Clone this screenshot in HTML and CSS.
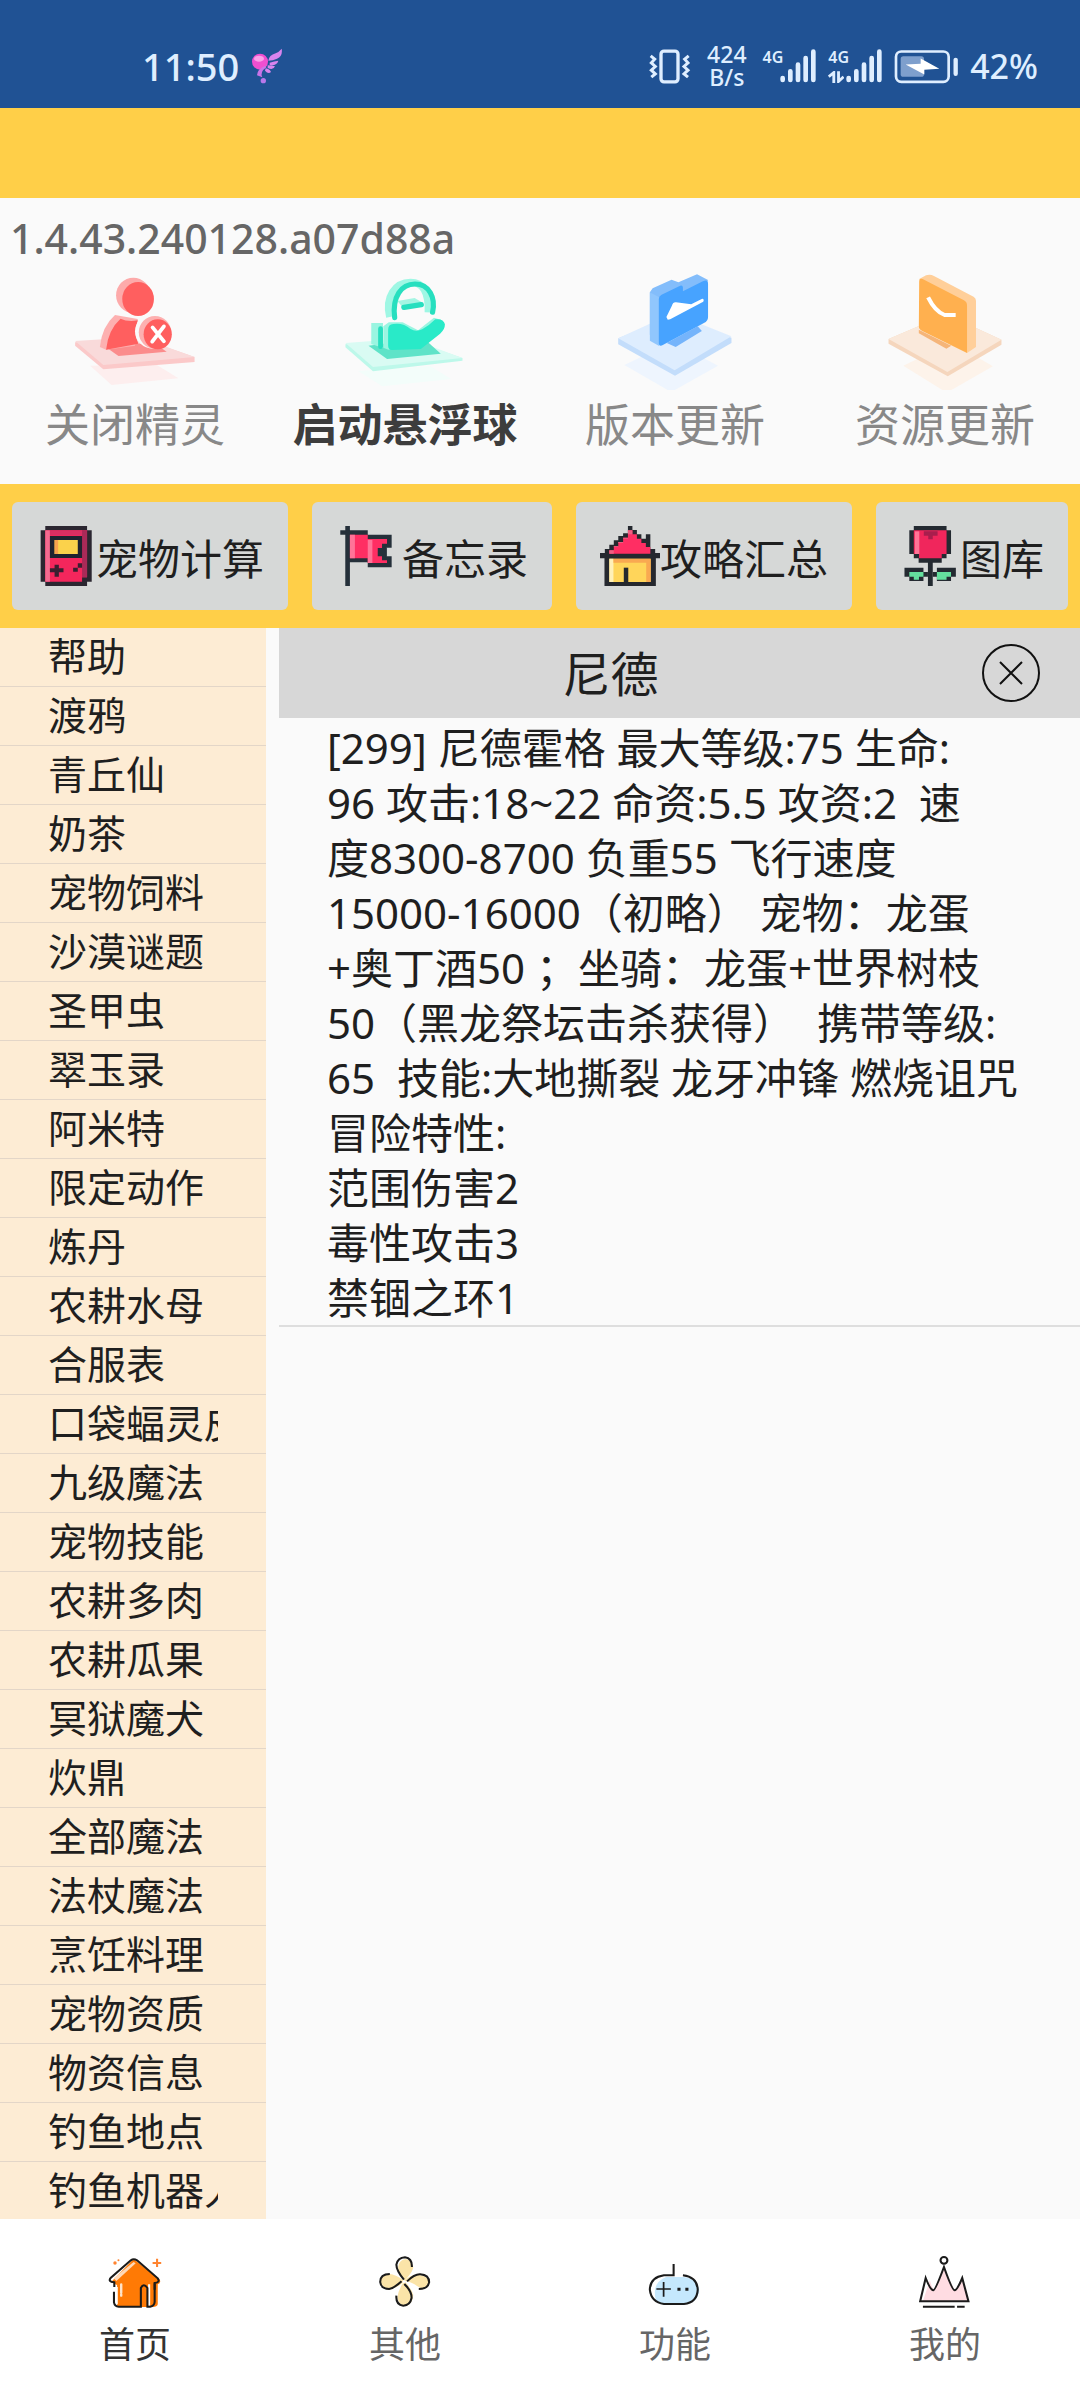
FILE: index.html
```html
<!DOCTYPE html>
<html lang="zh-CN">
<head>
  <meta charset="UTF-8" />
  <meta name="viewport" content="width=device-width, initial-scale=1.0"/>
  <title>首页</title>
  <link rel="stylesheet" href="styles.css">
</head>
<body>
  <div class="status-bar">
    <span class="time">11:50</span>
    <svg class="wing" viewBox="728 142 96 108" aria-hidden="true">
      <circle cx="755" cy="183" r="24" fill="#f04fd0"/>
      <ellipse cx="752" cy="174" rx="15" ry="9" fill="#fba0e8"/>
      <path d="M780 180q2-16 22-22q10-4 18-14q4 22-14 30q-12 6-26 6zM784 186q14-4 26-6q-4 16-26 13zM778 194q14 0 22 3q-5 13-22 5zM772 203q12 2 16 11q-8 8-18-4z" fill="#d884ee"/>
      <path d="M770 196q-24 10-24 28l16 6q-8-16 12-30z" fill="#c974e8"/>
      <circle cx="765" cy="240" r="8" fill="#b878ea"/>
    </svg>

    <div class="status-right">
      <svg class="vibrate" viewBox="147 84 126 104" fill="none" stroke="#dfeeff" aria-hidden="true">
        <rect x="183" y="90" width="51" height="92" rx="9" stroke-width="10"/>
        <path d="M152 104l12 10l-10 11l12 11l-12 11l12 11l-12 10M266 104l-12 10l10 11l-12 11l12 11l-12 11l12 10" stroke-width="9"/>
      </svg>
      <div class="speed">
        <span>424</span>
        <span>B/s</span>
      </div>
      <div class="signal">
        <span>4G</span>
        <svg viewBox="545 84 108 100" stroke="#dfeeff" stroke-width="14" stroke-linecap="round" aria-hidden="true">
          <path d="M553 170v6M576 150v26M599 130v46M622 110v66M645 91v85"/>
        </svg>
      </div>
      <div class="signal">
        <span>4G</span>
        <svg viewBox="545 84 108 100" stroke="#dfeeff" stroke-width="14" stroke-linecap="round" aria-hidden="true">
          <path d="M553 170v6M576 150v26M599 130v46M622 110v66M645 91v85"/>
        </svg>
        <svg class="data" viewBox="685 146 50 38" fill="none" stroke="#dfeeff" stroke-width="9" aria-hidden="true">
          <path d="M687 164l16-13v33M718 147v32l16-15"/>
        </svg>
      </div>
      <svg class="battery" viewBox="883 84 192 104" aria-hidden="true">
        <rect x="903" y="105" width="70" height="62" rx="8" fill="#7e9fcd"/>
        <rect x="889" y="91" width="158" height="91" rx="16" fill="none" stroke="#dfeeff" stroke-width="8"/>
        <path d="M918 130l45-2v-16l56 31l-45 3v14z" fill="#fff"/>
        <path d="M1068 116v42" stroke="#dfeeff" stroke-width="13" stroke-linecap="round"/>
      </svg>
      <span class="percent">42%</span>
    </div>
  </div>

  <div class="title-bar"></div>

  <section class="top-panel">
    <p class="version">1.4.43.240128.a07d88a</p>
    <div class="actions">
      <button type="button" class="action">
        <svg viewBox="209 45 366 360" preserveAspectRatio="none" aria-hidden="true">
          <path d="M262 332l190-4l66 42l-194 20z" fill="#fdeeee"/>
          <path d="M218 262l185-14l162 58v15l-265 22l-82-71z" fill="#fbc9c9"/>
          <path d="M218 258l185-12l162 60l-265 24z" fill="#f9dada"/>
          <path d="M312 280l130-20l42 30l-140 13z" fill="#fb8c8c"/>
          <ellipse cx="387" cy="121" rx="50" ry="53" fill="#fdaaaa"/>
          <ellipse cx="401" cy="132" rx="46" ry="51" fill="#ff5f5f"/>
          <path d="M290 276q6-62 44-96l66 12l-8 80l-84 12z" fill="#fdb0b0"/>
          <path d="M308 284q6-60 42-93q20 10 50 5q-14 40 2 70z" fill="#ff5f5f"/>
          <ellipse cx="444" cy="229" rx="52" ry="52" fill="#fafafa"/>
          <ellipse cx="450" cy="232" rx="47" ry="49" fill="#fdb0b0"/>
          <ellipse cx="458" cy="238" rx="41" ry="45" fill="#ff5f5f"/>
          <path d="M443 217l33 42M476 214l-34 46" stroke="#fff" stroke-width="11" stroke-linecap="round"/>
        </svg>
        <span>关闭精灵</span>
      </button>
      <button type="button" class="action active">
        <svg viewBox="993 45 366 360" preserveAspectRatio="none" aria-hidden="true">
          <path d="M1040 348l210-14l60 38l-200 22z" fill="#f3fdfa"/>
          <path d="M1003 268l185-14l155 55v8l-260 32l-80-72z" fill="#bdf8ea"/>
          <path d="M1003 264l185-14l155 59l-260 27z" fill="#d9fbf3"/>
          <path d="M1070 272l160-22l50 46l-156 16z" fill="#5fe3c8"/>
          <path d="M1132 186C1118 126 1148 82 1192 82C1228 82 1246 110 1244 172" fill="none" stroke="#9ff7e4" stroke-width="22"/>
          <path d="M1146 188C1138 124 1166 87 1205 87C1246 87 1266 128 1256 172" fill="none" stroke="#27dfbf" stroke-width="15" stroke-linecap="round"/>
          <path d="M1154 138l50-9l26 16l-56 18z" fill="#a5f5e3"/>
          <path d="M1173 157l50-8" stroke="#27dfbf" stroke-width="16" stroke-linecap="round"/>
          <path d="M1078 204h34v75l-34-12z" fill="#9af5e1"/>
          <path d="M1105 221v54" stroke="#27dfbf" stroke-width="14" stroke-linecap="round"/>
          <path d="M1113 214l16-12l40 0l45 24l46-38l20 6l-60 60l-92 30l-15-6z" fill="#9af5e1"/>
          <path d="M1127 224Q1127 208 1142 207Q1170 202 1192 222Q1208 232 1226 223Q1246 212 1264 193Q1288 190 1292 208Q1292 224 1278 236L1222 282L1138 285Q1127 284 1127 272z" fill="#29eac8"/>
        </svg>
        <span>启动悬浮球</span>
      </button>
      <button type="button" class="action">
        <svg viewBox="209 45 366 360" preserveAspectRatio="none" aria-hidden="true">
          <path d="M245 330l140-70l132 72l-136 79z" fill="#eef5fe"/>
          <path d="M227 250l160-66l169 64v16l-164 98l-165-94z" fill="#c3ddfb"/>
          <path d="M227 250l160-76l169 70l-165 102z" fill="#deedfe"/>
          <path d="M368 264l90-50l12 14l-76 48z" fill="#75b4fb"/>
          <path d="M319 112l8-12l55-26l20 8l54-24l32 17l-10 20l-130 160l-29-16z" fill="#83bdfb"/>
          <path d="M319 112l27 15v146l-27-16z" fill="#90c6fd"/>
          <path d="M345 132q0-9 8-13l54-27q7-3 8 5v12l58-30q15-7 15 7v100q0 12-12 18l-118 65q-13 8-13-6z" fill="#47a3ff"/>
          <path d="M367 186l4 8l7-1l96-53q4-8-3-9l-32 17l-44-6q-9-1-12 10z" fill="#fff"/>
        </svg>
        <span>版本更新</span>
      </button>
      <button type="button" class="action">
        <svg viewBox="993 45 366 360" preserveAspectRatio="none" aria-hidden="true">
          <path d="M1055 332l140-70l120 72l-134 79z" fill="#fdf3ea"/>
          <path d="M1012 252l168-74l160 76v15l-156 95l-172-98z" fill="#f5d6bd"/>
          <path d="M1012 252l168-74l160 76l-157 97z" fill="#fae9db"/>
          <path d="M1100 224l94 48l-14 9l-80-46z" fill="#f5b579"/>
          <path d="M1101 72l20-11q12-4 23 2l115 62q7 4 7 12v139l-26 18z" fill="#ffcf9a"/>
          <path d="M1101 80q0-12 10-8l120 64q9 5 9 15v143l-130-66q-10-5-10-14z" fill="#ffb04f"/>
          <path d="M1127 127q20 42 48 53h32" fill="none" stroke="#fff" stroke-width="12"/>
        </svg>
        <span>资源更新</span>
      </button>
    </div>
  </section>

  <div class="tool-bar">
    <button type="button" class="tool">
      <svg viewBox="101 138 168 180" preserveAspectRatio="none" aria-hidden="true">
        <path d="M127 138h117v13h13v154h-13v13H127v-13h-13V151h13z" fill="#2b2630"/>
        <path d="M127 151h117v141H230v13H127z" fill="#f4265c"/>
        <path d="M127 151h13v154h-13z" fill="#f56a90"/>
        <path d="M140 151h90v15h-90z" fill="#d92f62"/>
        <path d="M230 151h14v141h-14z" fill="#a92a58"/>
        <path d="M140 168h90v66h-90z" fill="#1f2330"/>
        <path d="M153 180h65v42h-65z" fill="#fbd24b"/>
        <path d="M153 180h10v42h-10z" fill="#f6a24e"/>
        <path d="M153 254h12v11h13v12h-13v13h-12v-13h-13v-12h13zM205 263h13v12h-13zM218 250h12v13h-12z" fill="#3a1f30"/>
      </svg>
      宠物计算
    </button>
    <button type="button" class="tool">
      <svg class="flag" viewBox="941 138 185 180" preserveAspectRatio="none" aria-hidden="true">
        <path d="M967 138h13v13h50v13h67v39h-14v26h14v33h-67v-15h-50v71h-13V164h-14v-13h14z" fill="#25303a"/>
        <path d="M980 164h50v13h54v14h-14v13h-12v25h12v12h14v8h-54v-14h-50z" fill="#ff2e63"/>
        <path d="M980 164h14v71h-14zM1030 180h13v69h-13z" fill="#ff7398"/>
        <path d="M1070 204h13v25h-13z" fill="#25303a"/>
      </svg>
      备忘录
    </button>
    <button type="button" class="tool">
      <svg viewBox="174 138 174 180" preserveAspectRatio="none" aria-hidden="true">
        <path d="M255 138h13v12h13v13h13v13h13v-13h13v44h14v12h14v16h-12v83H187v-83h-13v-16h14v-12h13v-13h13v-13h13v-13h14v-8h14z" fill="#25282e"/>
        <path d="M255 151h13v12h13v13h13v13h13v12h13v20H201v-10h13v-12h13v-13h14v-13h14z" fill="#ff2e63"/>
        <path d="M255 151h13v12h-13v13h-14v13h-14v12h-13v20h-13v-10h13v-12h13v-13h14v-13h14z" fill="#ef5f82"/>
        <path d="M201 236h120v70H201z" fill="#ffd55a"/>
        <path d="M201 236h12v70h-12z" fill="#fff0b8"/>
        <path d="M213 236h108v12H213zM308 236h13v70h-13z" fill="#f9a951"/>
        <path d="M243 263h13v45h-13z" fill="#25282e"/>
      </svg>
      攻略汇总
    </button>
    <button type="button" class="tool">
      <svg viewBox="1045 138 174 180" preserveAspectRatio="none" aria-hidden="true">
        <path d="M1085 138h95v13h13v71h-13v13h-14v13h-26v70h-14v-70h-27v-13h-14v-13h-13v-71h13z" fill="#242a31"/>
        <path d="M1058 263h55v13h13v14h-13v13h-41v-13h-14zM1152 263h55v27h-14v13h-41v-13h-12v-14h12z" fill="#242a31"/>
        <path d="M1085 151h95v71h-14v13h-66v-13h-15z" fill="#f0265c"/>
        <path d="M1088 154h13v68h-13z" fill="#ff7597"/>
        <path d="M1114 154h40v13h-14v11h-13v-11h-13z" fill="#a91e4d"/>
        <path d="M1072 276h41v14h-13v9h-15v-9h-13zM1152 276h41v14h-13v9h-28z" fill="#64df9d"/>
      </svg>
      图库
    </button>
  </div>

  <div class="content">
    <nav class="sidebar">
      <ul>
        <li><a href="#">帮助</a></li>
        <li><a href="#">渡鸦</a></li>
        <li><a href="#">青丘仙</a></li>
        <li><a href="#">奶茶</a></li>
        <li><a href="#">宠物饲料</a></li>
        <li><a href="#">沙漠谜题</a></li>
        <li><a href="#">圣甲虫</a></li>
        <li><a href="#">翠玉录</a></li>
        <li><a href="#">阿米特</a></li>
        <li><a href="#">限定动作</a></li>
        <li><a href="#">炼丹</a></li>
        <li><a href="#">农耕水母</a></li>
        <li><a href="#">合服表</a></li>
        <li><a href="#">口袋蝠灵皮</a></li>
        <li><a href="#">九级魔法</a></li>
        <li><a href="#">宠物技能</a></li>
        <li><a href="#">农耕多肉</a></li>
        <li><a href="#">农耕瓜果</a></li>
        <li><a href="#">冥狱魔犬</a></li>
        <li><a href="#">炊鼎</a></li>
        <li><a href="#">全部魔法</a></li>
        <li><a href="#">法杖魔法</a></li>
        <li><a href="#">烹饪料理</a></li>
        <li><a href="#">宠物资质</a></li>
        <li><a href="#">物资信息</a></li>
        <li><a href="#">钓鱼地点</a></li>
        <li><a href="#">钓鱼机器人</a></li>
      </ul>
    </nav>

    <main class="result">
      <div class="search">
        <input type="text" value="尼德" aria-label="搜索">
        <button type="button" aria-label="清除">
          <svg viewBox="0 0 58 58" fill="none" stroke="#111" stroke-width="2" aria-hidden="true">
            <circle cx="29" cy="29" r="28"/>
            <path d="M18 18l22 22M40 18L18 40"/>
          </svg>
        </button>
      </div>
      <p class="detail">[299] 尼德霍格 最大等级:75 生命:
96 攻击:18~22 命资:5.5 攻资:2  速
度8300-8700 负重55 飞行速度
15000-16000（初略） 宠物：龙蛋
+奥丁酒50 ；坐骑：龙蛋+世界树枝
50（黑龙祭坛击杀获得）  携带等级:
65  技能:大地撕裂 龙牙冲锋 燃烧诅咒
冒险特性:
范围伤害2
毒性攻击3
禁锢之环1</p>
    </main>
  </div>

  <nav class="tab-bar">
    <a href="#" class="tab active">
      <svg viewBox="305 157 174 180" preserveAspectRatio="none" fill="none" aria-hidden="true">
        <path d="M388 178l76 62q4 10-6 14v60q-2 8-14 8H340v-66l-18-8z" fill="#ff7a05"/>
        <path d="M330 236l58-49l6 4l-56 53z" fill="#ffd9b8"/>
        <path d="M433 254v64M339 262v52" stroke="#fff" stroke-width="6"/>
        <path d="M331 276v32q2 12 14 13h64v-56q8-16 19 0v56h8q12-2 13-14v-56" stroke="#1b1b1b" stroke-width="6"/>
        <path d="M332 262v-14q-20-2-10-14l58-52q8-6 18 0l60 54q8 12-9 14v20" stroke="#1b1b1b" stroke-width="6"/>
        <path d="M352 254v25M352 284v4" stroke="#ffe3c8" stroke-width="7" stroke-linecap="round"/>
        <path d="M456 177v25M443 190h25" stroke="#ff8430" stroke-width="6"/>
        <circle cx="334" cy="190" r="5" fill="#ff8430"/>
        <circle cx="344" cy="182" r="3" fill="#ff8430"/>
      </svg>
      <span>首页</span>
    </a>
    <a href="#" class="tab">
      <svg viewBox="1089 157 174 180" preserveAspectRatio="none" fill="none" aria-hidden="true">
        <path d="M1174 244q-18-25-18-42q4-22 22-24q20 4 22 26q-4 16-26 40q20-22 44-18q26 4 28 22q-4 16-20 20l-14-8q-16-14-38-16q22 24 26 42q-2 28-22 34q-20-4-24-26q2-24 20-50q-18 22-46 24q-20-4-24-24q4-18 24-22q24 2 46 22z" fill="#fbe4a8"/>
        <path d="M1173 240q-22-28-22-45q4-21 25-22q21 3 20 29M1132 223q-28 0-28 24q2 20 26 21q14-2 36-23M1182 245q22-22 38-21q26 2 26 24q-4 20-30 20M1174 253q22 22 21 42q-4 22-24 23q-22-2-20-30" stroke="#1b1b1b" stroke-width="6"/>
        <circle cx="1173" cy="246" r="4" fill="#fff"/>
      </svg>
      <span>其他</span>
    </a>
    <a href="#" class="tab">
      <svg viewBox="305 157 174 180" preserveAspectRatio="none" fill="none" aria-hidden="true">
        <path d="M366 232h52q46 8 44 44q-8 36-40 38h-66q-14-4-20-14q-12-50 30-68z" fill="#c5e8fd"/>
        <path d="M388 193v34h-28q-40 6-41 43q4 38 41 43h58q38-4 40-43q-2-38-43-43" stroke="#1b1b1b" stroke-width="6"/>
        <path d="M338 268h42M359 247v44" stroke="#1b1b1b" stroke-width="5"/>
        <path d="M399 264h9v9h-9zM422 264h9v9h-9z" fill="#1b1b1b"/>
      </svg>
      <span>功能</span>
    </a>
    <a href="#" class="tab">
      <svg viewBox="1089 157 174 180" preserveAspectRatio="none" fill="none" aria-hidden="true">
        <path d="M1112 304l20-62q14 50 20 10l22-46l30 66l22-34l18 66z" fill="#ffdce2"/>
        <path d="M1104 305l16-70q14 37 22 37q6 0 31-70q24 70 31 70t22-37l18 70z" stroke="#1b1b1b" stroke-width="6"/>
        <circle cx="1173" cy="182" r="10" stroke="#1b1b1b" stroke-width="6"/>
        <path d="M1112 321h92M1211 321h22" stroke="#1b1b1b" stroke-width="6"/>
      </svg>
      <span>我的</span>
    </a>
  </nav>
</body>
</html>
```
FILE: styles.css
```css
* {
  margin: 0;
  padding: 0;
  box-sizing: border-box;
}

:root {
  --azul: #205294;
  --amarelo: #ffcf48;
  --fundo: #fafafa;
  --creme: #fdecd4;
  --cinza: #d7d7d7;
  --botao: #d6d8d7;
  --texto: #1f1f1f;
  --status: #dfeeff;
}

body {
  font-family: "Noto Sans", "Noto Sans CJK SC", sans-serif;
  background-color: var(--fundo);
  color: var(--texto);
  height: 100vh;
  display: flex;
  flex-direction: column;
}

button,
input {
  font-family: inherit;
  color: inherit;
  border: none;
  background: none;
}

a {
  color: inherit;
  text-decoration: none;
}

svg {
  display: block;
  flex-shrink: 0;
}

/* status bar */
.status-bar {
  flex-shrink: 0;
  height: 108px;
  padding: 24px 42px 0 142px;
  background-color: var(--azul);
  color: var(--status);
  display: flex;
  align-items: center;
  font-weight: 500;
}

.time {
  font-size: 38px;
}

.wing {
  width: 32px;
  height: 36px;
  margin-left: 12px;
}

.status-right {
  margin-left: auto;
  display: flex;
  align-items: center;
  gap: 12px;
}

.vibrate {
  width: 42px;
  height: 35px;
}

.speed {
  display: flex;
  flex-direction: column;
  align-items: center;
  margin: 0 4px;
  font-size: 23px;
  line-height: 23px;
}

.signal {
  position: relative;
  display: flex;
  align-items: flex-start;
  font-size: 16px;
  font-weight: 600;
  line-height: 16px;
}

.signal svg {
  width: 36px;
  height: 34px;
  margin-left: -3px;
}

.signal .data {
  position: absolute;
  left: 0;
  bottom: 0;
  width: 16px;
  height: 12px;
  margin-left: 0;
}

.battery {
  width: 64px;
  height: 35px;
}

.percent {
  font-size: 34px;
}

.title-bar {
  flex-shrink: 0;
  height: 90px;
  background-color: var(--amarelo);
}

/* version and quick actions */
.top-panel {
  flex-shrink: 0;
  padding: 8px 0 27px;
}

.version {
  padding: 0 10px;
  color: #666;
  font-size: 41px;
  font-weight: 500;
  line-height: 64px;
}

.actions {
  display: grid;
  grid-template-columns: repeat(4, 1fr);
}

.action {
  display: flex;
  flex-direction: column;
  align-items: center;
  gap: 3px;
  color: #888;
  font-size: 45px;
  line-height: 64px;
  white-space: nowrap;
  cursor: pointer;
}

.action svg {
  width: 126px;
  height: 120px;
}

.action.active {
  color: #3d3d3d;
  font-weight: 700;
}

/* tools */
.tool-bar {
  flex-shrink: 0;
  display: flex;
  gap: 24px;
  padding: 18px 12px;
  background-color: var(--amarelo);
}

.tool {
  flex: 1 1 auto;
  display: flex;
  align-items: center;
  justify-content: center;
  height: 108px;
  padding: 0 24px;
  border-radius: 6px;
  background-color: var(--botao);
  font-size: 42px;
  white-space: nowrap;
  cursor: pointer;
}

.tool svg {
  width: 60px;
  height: 60px;
}

.tool .flag {
  width: 66px;
}

/* list and result */
.content {
  flex: 1;
  min-height: 0;
  display: flex;
  gap: 13px;
}

.sidebar {
  width: 266px;
  flex-shrink: 0;
  overflow: hidden;
  background-color: var(--creme);
}

.sidebar ul {
  list-style: none;
}

.sidebar li {
  padding: 0 48px 2px;
  border-bottom: 1px solid #e3d6c8;
}

.sidebar a {
  display: block;
  overflow: hidden;
  font-size: 39px;
  line-height: 56px;
  white-space: nowrap;
}

.result {
  flex: 1;
  min-width: 0;
}

.search {
  display: flex;
  height: 90px;
  background-color: var(--cinza);
}

.search input {
  flex: 1;
  min-width: 0;
  padding-bottom: 4px;
  font-size: 48px;
  text-align: center;
  outline: none;
}

.search button {
  width: 138px;
  display: flex;
  align-items: center;
  justify-content: center;
  cursor: pointer;
}

.search svg {
  width: 58px;
  height: 58px;
}

.detail {
  padding: 2px 48px 0;
  border-bottom: 2px solid #dedede;
  font-size: 42px;
  line-height: 55px;
  white-space: pre-wrap;
}

/* bottom tabs */
.tab-bar {
  flex-shrink: 0;
  display: grid;
  grid-template-columns: repeat(4, 1fr);
  height: 181px;
  padding-top: 33px;
  background-color: #fff;
}

.tab {
  display: flex;
  flex-direction: column;
  align-items: center;
  gap: 6px;
  color: #666;
  font-size: 36px;
  line-height: 54px;
}

.tab svg {
  width: 60px;
  height: 60px;
}

.tab.active {
  color: #333;
}
```
